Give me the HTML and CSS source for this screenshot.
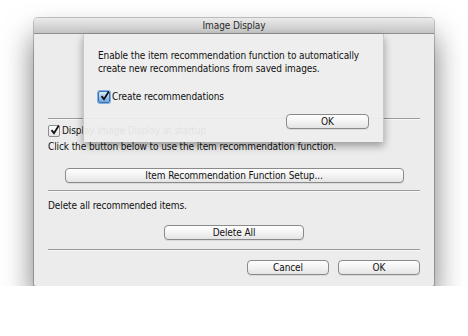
FILE: index.html
```html
<!DOCTYPE html>
<html>
<head>
    <link rel="stylesheet" href="styles.css">
</head>
<body>
    <div class="stage">
        <div class="window">
            <div class="titlebar">Image Display</div>

            <div class="content">
                <div class="popup-row">
                    <span class="popup-label">Image View</span>
                    <div class="popup"><span>Display entire image</span><span class="updown">&#8661;</span></div>
                </div>
                <div class="popup-row second">
                    <span class="popup-label"></span>
                    <div class="popup"><span></span><span class="updown">&#8661;</span></div>
                </div>

                <div class="separator sep-top"></div>

                <label class="check-row startup">
                    <span class="checkbox">
                        <svg viewBox="0 0 12 12" width="12" height="12"><path d="M2.5 6.2 L5 9.2 L9.8 1.6" fill="none" stroke="#111" stroke-width="1.8"/></svg>
                    </span>
                    Display Image Display at startup
                </label>

                <div class="text click-text">Click the button below to use the item recommendation function.</div>

                <div class="center-row setup-row">
                    <button class="btn wide">Item Recommendation Function Setup...</button>
                </div>

                <div class="separator sep-mid"></div>

                <div class="text delete-text">Delete all recommended items.</div>

                <div class="center-row delete-row">
                    <button class="btn delete">Delete All</button>
                </div>

                <div class="separator sep-bottom"></div>

                <div class="footer">
                    <button class="btn footer-btn">Cancel</button>
                    <button class="btn footer-btn">OK</button>
                </div>
            </div>

            <div class="sheet">
                <div class="sheet-text">Enable the item recommendation function to automatically<br>create new recommendations from saved images.</div>
                <label class="check-row sheet-check">
                    <span class="checkbox blue">
                        <svg viewBox="0 0 12 12" width="12" height="12"><path d="M2.5 6.2 L5 9.2 L9.8 1.6" fill="none" stroke="#111" stroke-width="1.8"/></svg>
                    </span>
                    Create recommendations
                </label>
                <div class="sheet-footer">
                    <button class="btn sheet-ok">OK</button>
                </div>
            </div>
        </div>
    </div>
</body>
</html>
```

FILE: styles.css
```css
body {
    margin: 0;
    background: #fff;
    font-family: "DejaVu Sans Condensed", "DejaVu Sans", sans-serif;
    font-size: 10px;
    letter-spacing: -0.1px;
    color: #111;
}
.stage {
    padding: 18px 0 0 34px;
}
.window {
    position: relative;
    width: 400px;
    height: 268px;
    background: #ececec;
    border-radius: 4px 4px 2px 2px;
    box-shadow: 0 18px 30px rgba(0, 0, 0, 0.55), 0 0 0 1px rgba(0, 0, 0, 0.22);
}
.titlebar {
    height: 16px;
    line-height: 16px;
    text-align: center;
    font-size: 10px;
    color: #2a2a2a;
    background: linear-gradient(#ebebeb, #c4c4c4);
    border-bottom: 1px solid #8e8e8e;
    border-radius: 4px 4px 0 0;
    box-sizing: border-box;
}
.content {
    padding: 35px 14px 0 14px;
    display: flex;
    flex-direction: column;
}
.popup-row {
    display: flex;
    align-items: center;
    height: 15px;
    color: #bdbdbd;
}
.popup-row.second {
    margin-top: 5px;
}
.popup-label {
    width: 127px;
    text-align: right;
    padding-right: 8px;
    box-sizing: border-box;
}
.popup {
    width: 172px;
    height: 15px;
    border: 1px solid #d8d8d8;
    border-radius: 3px;
    display: flex;
    justify-content: space-between;
    align-items: center;
    padding: 0 6px;
    box-sizing: border-box;
}
.updown {
    font-size: 8px;
}
.separator {
    height: 1px;
    background: #9a9a9a;
    border-bottom: 1px solid #f8f8f8;
}
.sep-top {
    margin-top: 14px;
}
.sep-mid {
    margin-top: 7px;
}
.sep-bottom {
    margin-top: 9px;
}
.check-row {
    display: flex;
    align-items: center;
    gap: 2px;
    height: 13px;
}
.startup {
    margin-top: 4px;
}
.checkbox {
    width: 10px;
    height: 10px;
    border: 1px solid #8c8c8c;
    border-radius: 2px;
    background: linear-gradient(#fff, #e4e4e4);
    position: relative;
    flex-shrink: 0;
}
.checkbox svg {
    position: absolute;
    left: 0;
    top: -2px;
}
.checkbox.blue {
    background: linear-gradient(#d8ebfb, #6fa8e0);
    border-color: #3f6fa8;
    box-shadow: 0 0 0 1px #7fb0e6;
}
.text {
    height: 13px;
    line-height: 13px;
}
.click-text {
    margin-top: 3px;
}
.delete-text {
    margin-top: 7px;
}
.center-row {
    display: flex;
    justify-content: center;
}
.setup-row {
    margin-top: 15px;
}
.delete-row {
    margin-top: 13px;
}
.btn {
    height: 15px;
    padding: 0;
    font-family: inherit;
    font-size: 10px;
    letter-spacing: inherit;
    line-height: 13px;
    color: #111;
    background: linear-gradient(#ffffff, #f3f3f3 50%, #e4e4e4);
    border: 1px solid #8a8a8a;
    border-radius: 4px;
    box-shadow: 0 1px 0 rgba(0, 0, 0, 0.08);
}
.wide {
    width: 339px;
}
.delete {
    width: 140px;
}
.footer {
    display: flex;
    justify-content: flex-end;
    gap: 9px;
    margin-top: 9px;
}
.footer-btn {
    width: 82px;
}
.sheet {
    position: absolute;
    left: 49px;
    top: 16px;
    width: 301px;
    height: 108px;
    box-sizing: border-box;
    padding: 15px 14px 0 14px;
    background: rgba(238, 238, 238, 0.94);
    border-left: 1px solid #c8c8c8;
    border-right: 1px solid #c8c8c8;
    box-shadow: 0 4px 8px rgba(0, 0, 0, 0.35);
}
.sheet-text {
    line-height: 13px;
}
.sheet-check {
    margin-top: 15px;
}
.sheet-footer {
    display: flex;
    justify-content: flex-end;
    margin-top: 11px;
}
.sheet-ok {
    width: 83px;
}
```
